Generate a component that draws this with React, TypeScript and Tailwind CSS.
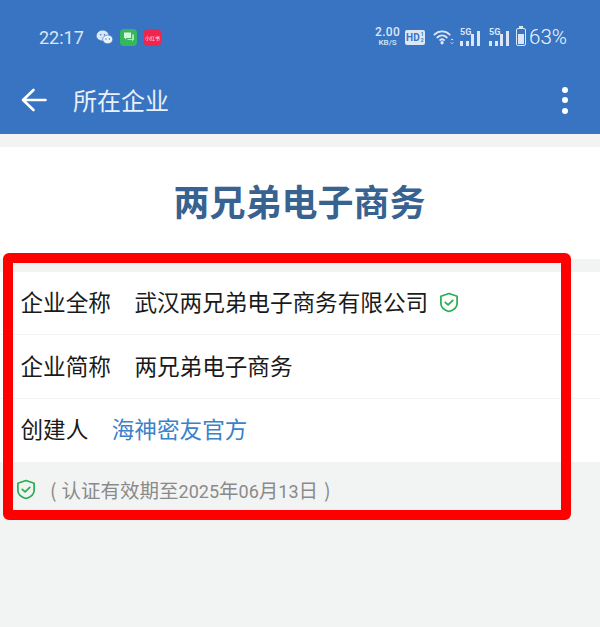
import React from 'react';

const CJK = "font-['Noto_Sans_CJK_SC','Noto_Sans',sans-serif]";
const DIGITS = "font-['Roboto',sans-serif] text-[18px]";

const Shield = ({ className }: { className: string }) => (
  <svg viewBox="0 0 20 22" fill="none" stroke="#27ae4f" strokeWidth="1.9" className={className}>
    <path d="M10 1 L19 4 V12 C19 16.5 14.5 19.5 10 21 C5.5 19.5 1 16.5 1 12 V4 Z" strokeLinejoin="round" />
    <path d="M5.8 10.8 L9 13.6 L14.2 8.6" strokeLinecap="round" strokeLinejoin="round" />
  </svg>
);

const Signal = () => (
  <div className="relative w-[22px] h-[17px]">
    <span className="absolute left-0 top-[-2px] font-['Roboto',sans-serif] text-[9px] leading-[10px] font-bold text-[#dbe7f6]">5G</span>
    <div className="absolute inset-0 flex items-end gap-[2.5px]">
      <span className="w-[3px] h-[5px] bg-[#dbe7f6]" />
      <span className="w-[3px] h-[5px] bg-[#dbe7f6]" />
      <span className="w-[3px] h-[12px] bg-[#dbe7f6]" />
      <span className="w-[3px] h-[15px] bg-[#dbe7f6]" />
    </div>
  </div>
);

const StatusBar = () => (
  <div className="flex items-center h-[69px] pl-[39px] pr-[33px] pt-[5px]">
    <span className="font-['Roboto',sans-serif] text-[18px] text-[#dbe7f6] w-[56px]">22:17</span>
    <svg viewBox="0 0 18 16" className="w-[17px] h-[15px] ml-[1px]">
      <ellipse cx="7" cy="6" rx="6.5" ry="5.4" fill="#dbe7f6" />
      <ellipse cx="12.4" cy="10" rx="5.4" ry="4.6" fill="#eaf1fa" stroke="#3874c2" strokeWidth="0.7" />
      <circle cx="5" cy="5" r="0.8" fill="#3874c2" />
      <circle cx="9" cy="5" r="0.8" fill="#3874c2" />
      <circle cx="10.6" cy="9.6" r="0.7" fill="#3874c2" />
      <circle cx="14.2" cy="9.6" r="0.7" fill="#3874c2" />
    </svg>
    <div className="ml-[7px] w-[17px] h-[17px] rounded-[4px] bg-[#35b85c] flex items-center justify-center">
      <svg viewBox="0 0 12 12" className="w-[12px] h-[12px]">
        <path d="M1 1.5 H8 V7 H3.5 L2 8.5 V7 H1 Z" fill="#d9f5e0" />
        <path d="M9 3.5 H11 V9 H10 V10.5 L8.5 9 H4.5 V8 H9 Z" fill="#a9e6bb" />
      </svg>
    </div>
    <div className={`ml-[7px] w-[17px] h-[17px] rounded-[4px] bg-[#f0254a] flex items-center justify-center text-[5px] leading-none text-white whitespace-nowrap ${CJK}`}>
      小红书
    </div>
    <div className="ml-auto flex items-center">
      <div className="flex flex-col items-center font-['Roboto',sans-serif] font-medium text-[#dbe7f6] mr-[5px]">
        <span className="text-[12px] leading-[11px] tracking-[0.3px]">2.00</span>
        <span className="text-[8px] leading-[9px]">KB/S</span>
      </div>
      <div className="flex items-center w-[20px] h-[15px] rounded-[2px] bg-[#dbe7f6] text-[#3874c2] font-['Roboto',sans-serif] font-bold pl-[1px] mr-[8px]">
        <span className="text-[10px] leading-[15px]">HD</span>
        <span className="text-[5px] leading-[6px] ml-[1px] w-[4px]">1 2</span>
      </div>
      <svg viewBox="0 0 22 16" className="w-[21px] h-[16px] mr-[6px]" fill="none" stroke="#dbe7f6" strokeWidth="1.9" strokeLinecap="round">
        <path d="M1.5 5.5 C6 1 13 1 17.5 5.5" />
        <path d="M4.5 8.5 C7.5 5.6 11.5 5.6 14.5 8.5" />
        <path d="M7.5 11.2 C8.7 10.2 10.3 10.2 11.5 11.2" />
        <circle cx="9.5" cy="14" r="0.8" fill="#dbe7f6" />
        <path d="M19 11 L20 10 L21 11 M19 14 L20 15 L21 14" strokeWidth="1" />
      </svg>
      <div className="mr-[7px]"><Signal /></div>
      <div className="mr-[5px]"><Signal /></div>
      <div className="relative w-[10px] h-[18px] rounded-[2px] border border-[#dbe7f6] mr-[3px] flex flex-col justify-end p-[1px]">
        <span className="absolute left-[2px] top-[-3px] w-[4px] h-[2px] bg-[#dbe7f6]" />
        <div className="h-[10px] bg-[#dbe7f6]" />
      </div>
      <span className="font-['Roboto',sans-serif] font-light text-[20.5px] leading-none text-[#eef4fb]">63%</span>
    </div>
  </div>
);

const Row = ({ label, children, last }: { label: string; children: React.ReactNode; last?: boolean }) => (
  <div className={`h-[63.33px] flex items-center pl-[20.5px] pb-[2px] text-[22.6px] text-[#1a1a1a] ${last ? '' : 'border-b border-[#f3f4f4]'}`}>
    <span className="mr-[23.5px] whitespace-nowrap">{label}</span>
    {children}
  </div>
);

export default function App() {
  return (
    <div className={`relative w-[600px] h-[627px] overflow-hidden bg-[#f2f4f4] ${CJK}`}>
      {/* Header */}
      <div className="h-[134px] bg-[#3874c2]">
        <StatusBar />
        <div className="h-[62px] flex items-center pl-[21px] pr-[32px]">
          <svg viewBox="0 0 26 24" className="w-[26px] h-[24px]" fill="none" stroke="#fff" strokeWidth="2.6" strokeLinecap="round" strokeLinejoin="round">
            <path d="M24.5 12 H2 M12.5 2 L2 12 L12.5 22" />
          </svg>
          <span className="ml-[26px] text-[24px] text-[#e8f0fa]">所在企业</span>
          <div className="ml-auto flex flex-col gap-[4.5px]">
            <span className="w-[6px] h-[6px] rounded-full bg-white" />
            <span className="w-[6px] h-[6px] rounded-full bg-white" />
            <span className="w-[6px] h-[6px] rounded-full bg-white" />
          </div>
        </div>
      </div>

      {/* Title */}
      <div className="mt-[13px] h-[112px] bg-white flex items-center justify-center pb-[7px] pr-[1px]">
        <h1 className="text-[36px] font-bold text-[#38628f]">两兄弟电子商务</h1>
      </div>

      {/* Details */}
      <div className="mt-[13px] bg-white">
        <Row label="企业全称">
          <span className="whitespace-nowrap">武汉两兄弟电子商务有限公司</span>
          <Shield className="w-[18px] h-[21px] ml-[11.5px]" />
        </Row>
        <Row label="企业简称">
          <span>两兄弟电子商务</span>
        </Row>
        <Row label="创建人" last>
          <span className="text-[#3b82c9]">海神密友官方</span>
        </Row>
      </div>

      {/* Certification */}
      <div className="h-[56px] flex items-center pl-[17px] text-[19.5px] text-[#8a8a8a]">
        <Shield className="w-[18px] h-[21px]" />
        <span className="ml-[15px] whitespace-nowrap">
          <span className="mr-[5px]">(</span>
          认证有效期至<span className={DIGITS}>2025</span>年<span className={DIGITS}>06</span>月<span className={DIGITS}>13</span>日
          <span className="ml-[6px]">)</span>
        </span>
      </div>

      {/* Red annotation */}
      <div className="absolute left-[3px] top-[253px] w-[568px] h-[267px] border-[10px] border-[#ff0000] rounded-[6px] pointer-events-none" />
    </div>
  );
}
